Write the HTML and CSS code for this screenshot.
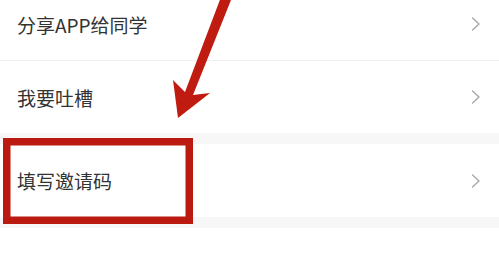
FILE: index.html
```html
<!DOCTYPE html>
<html lang="zh-CN">
<head>
<meta charset="utf-8">
<title>设置</title>
<link rel="stylesheet" href="styles.css">
</head>
<body>
<div class="page">
  <div class="list">
    <div class="row row-first">
      <span class="label">分享APP给同学</span>
      <svg class="chev" width="10" height="14" viewBox="0 0 10 14"><polyline points="1.5,1 8,7 1.5,13" /></svg>
    </div>
    <div class="row">
      <span class="label">我要吐槽</span>
      <svg class="chev" width="10" height="14" viewBox="0 0 10 14"><polyline points="1.5,1 8,7 1.5,13" /></svg>
    </div>
  </div>
  <div class="gap"></div>
  <div class="list">
    <div class="row row-tall">
      <span class="label">填写邀请码</span>
      <svg class="chev" width="10" height="14" viewBox="0 0 10 14"><polyline points="1.5,1 8,7 1.5,13" /></svg>
    </div>
  </div>
  <div class="gap"></div>
  <div class="list">
    <div class="row row-last">
      <span class="label">清除缓存数据</span>
      <svg class="chev" width="10" height="14" viewBox="0 0 10 14"><polyline points="1.5,1 8,7 1.5,13" /></svg>
    </div>
  </div>
  <svg class="annot" width="499" height="254" viewBox="0 0 499 254">
    <polygon class="arrow" points="221,-3 231,0 193,95 210,93 178,118 173,80 185,92" />
    <rect class="box" x="6.75" y="141.75" width="182.5" height="78.5" />
  </svg>
</div>
</body>
</html>
```
FILE: styles.css
```css
html, body {
  margin: 0;
  padding: 0;
  background: #ffffff;
}
body {
  width: 499px;
  height: 254px;
  overflow: hidden;
  font-family: "Noto Sans CJK SC", "Noto Sans", sans-serif;
}
.page {
  position: relative;
  width: 499px;
  height: 254px;
  overflow: hidden;
}
.list {
  background: #ffffff;
}
.row {
  height: 72px;
  display: flex;
  align-items: center;
  justify-content: space-between;
  padding: 0 18px 0 17px;
  box-sizing: border-box;
}
.row-first {
  margin-top: -12px;
  height: 73px;
  border-bottom: 1px solid #efefef;
}
.row-tall {
  height: 73px;
}
.row-last {
  padding-bottom: 4px;
}
.label {
  font-size: 19px;
  color: #333333;
  line-height: 1;
}
.chev polyline {
  fill: none;
  stroke: #a8a8a8;
  stroke-width: 1.4;
  stroke-linecap: round;
  stroke-linejoin: round;
}
.gap {
  height: 11px;
  background: #f7f7f7;
}
.annot {
  position: absolute;
  left: 0;
  top: 0;
  pointer-events: none;
}
.arrow {
  fill: #bf1b10;
}
.box {
  fill: none;
  stroke: #bb1a10;
  stroke-width: 7.5;
}
```
